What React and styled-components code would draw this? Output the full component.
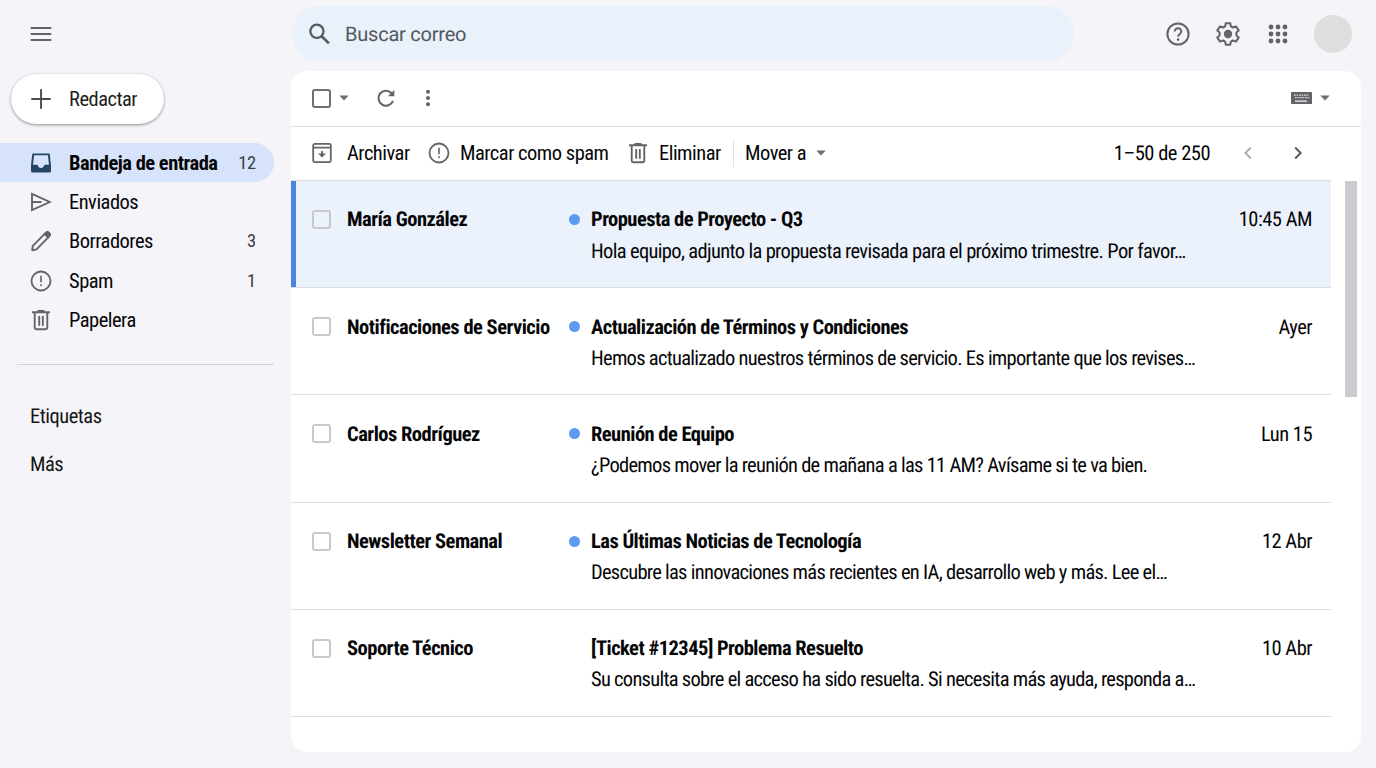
import React, { useState } from 'react';
import styled, { createGlobalStyle, css } from 'styled-components';

const GlobalStyle = createGlobalStyle`
  * { box-sizing: border-box; }
  body {
    margin: 0;
    background: #f4f4f9;
    color: #060607;
    font-family: "Roboto Condensed", Roboto, "Liberation Sans", sans-serif;
    font-stretch: 75%;
    font-size: 20.5px;
    letter-spacing: -.5px;
    line-height: 24px;
    text-rendering: geometricPrecision;
    overflow: hidden;
  }
  button {
    font: inherit;
    font-stretch: inherit;
    letter-spacing: inherit;
    color: inherit;
    background: none;
    border: 0;
    padding: 0;
    cursor: pointer;
  }
  svg { display: block; flex: none; }
`;

const Page = styled.div`
  display: grid;
  grid-template-columns: 291px 1070px;
  grid-template-rows: 71px 681px;
  width: 1376px;
  height: 768px;
`;

const MenuCell = styled.div`
  display: flex;
  align-items: center;
  padding: 0 0 3px 30px;
`;

const TopBar = styled.header`
  display: flex;
  align-items: center;
  height: 68px;
`;

const SearchBox = styled.div`
  display: flex;
  align-items: center;
  gap: 15px;
  width: 782px;
  height: 55px;
  margin: 0 0 1px 1px;
  padding-left: 17px;
  border-radius: 28px;
  background: #e9f1fb;
`;

const SearchText = styled.span`
  font-family: Roboto, sans-serif;
  font-stretch: 100%;
  font-size: 20px;
  letter-spacing: -.22px;
  color: #55575b;
`;

const TopIcons = styled.div`
  display: flex;
  align-items: center;
  gap: 26px;
  margin-left: 92px;
`;

const Avatar = styled.div`
  width: 38px;
  height: 38px;
  margin-left: -2px;
  border-radius: 50%;
  background: #dedede;
`;

const Sidebar = styled.aside`
  padding-top: 3px;
`;

const Compose = styled.button`
  display: flex;
  align-items: center;
  gap: 18px;
  width: 153px;
  height: 50px;
  margin: 0 0 19px 11px;
  padding-left: 20px;
  border-radius: 25px;
  background: #fff;
  color: #1f1f20;
  box-shadow: 0 1px 3px rgba(0, 0, 0, .42);
`;

const NavItem = styled.button`
  display: flex;
  align-items: center;
  gap: 17px;
  width: 274px;
  height: 39.4px;
  padding: 0 18px 0 30px;
  border-radius: 0 20px 20px 0;
  text-align: left;
  ${p => p.$active && css`
    background: #d6e3fa;
    font-weight: 700;
  `}
`;

const NavLabel = styled.span`
  flex: 1;
  white-space: nowrap;
`;

const Count = styled.span`
  font-size: 18.5px;
  font-weight: 400;
  letter-spacing: -.2px;
  color: #3c3d40;
`;

const NavDivider = styled.hr`
  width: 257px;
  height: 1px;
  margin: 24px 0 40px 17px;
  border: 0;
  background: #d3d4d9;
`;

const SideLink = styled.div`
  height: 24px;
  margin: 0 0 24.5px 30px;
  color: #161617;
`;

const Panel = styled.main`
  display: flex;
  flex-direction: column;
  border-radius: 16px;
  background: #fff;
  overflow: hidden;
`;

const Toolbar = styled.div`
  display: flex;
  align-items: center;
  height: 56px;
  padding: 0 31px 1px 21px;
  border-bottom: 1.5px solid #e0e1e4;
`;

const Spacer = styled.div`
  flex: 1;
`;

const Gap = styled.div`
  width: ${p => p.$w}px;
`;

const Actions = styled.div`
  display: flex;
  align-items: center;
  height: 54px;
  width: 1040px;
  padding: 0 0 1px 21px;
  border-bottom: 1px solid #dcdee1;
  white-space: nowrap;
`;

const Action = styled.button`
  display: flex;
  align-items: center;
  gap: ${p => p.$gap || 10}px;
  width: ${p => p.$w}px;
`;

const ActionDivider = styled.div`
  width: 1px;
  height: 28px;
  background: #dfe1e4;
`;

const Range = styled.span`
  margin-right: 28px;
  padding-top: 1px;
`;

const Body = styled.div`
  display: flex;
  justify-content: space-between;
  flex: 1;
`;

const List = styled.div`
  width: 1040px;
`;

const Mail = styled.div`
  display: grid;
  grid-template-columns: 35px 222px 22px 1fr auto;
  height: 107.2px;
  padding: 27.4px 19px 0 21px;
  border-bottom: 1px solid #dcdee2;
  ${p => p.$selected && css`
    background: #ebf2fc;
    box-shadow: inset 5px 0 #4a86e0;
  `}
`;

const Check = styled.span`
  width: 19px;
  height: 19px;
  border: ${p => (p.$dark ? '2px solid #6e7073' : '2px solid #c8c9cc')};
  border-radius: 3px;
  ${p => !p.$dark && 'margin-top: 1.6px;'}
`;

const Sender = styled.span`
  font-weight: 700;
  white-space: nowrap;
`;

const Dot = styled.span`
  width: 11px;
  height: 11px;
  margin-top: 5.6px;
  border-radius: 50%;
  background: ${p => (p.$on ? '#5c9bf0' : 'transparent')};
`;

const Subject = styled.div`
  font-weight: 700;
  letter-spacing: -.52px;
  white-space: nowrap;
`;

const Preview = styled.div`
  margin-top: 7.2px;
  letter-spacing: ${p => p.$tracking || -.72}px;
  white-space: nowrap;
`;

const Time = styled.span`
  white-space: nowrap;
`;

const Scrollbar = styled.div`
  width: 12px;
  height: 216px;
  margin-right: 4px;
  background: #cbccd0;
`;

const GREY = '#626467';

const MenuIcon = () => (
  <svg width="22" height="16" viewBox="0 0 22 16" fill={GREY}>
    <path d="M.7 1h20.6v1.900H.7zM.7 7h20.6v1.900H.7zM.7 13h20.6v1.900H.7z" />
  </svg>
);

const SearchIcon = () => (
  <svg width="21" height="22" viewBox="0 0 21 22" fill="none" stroke="#58595c" strokeWidth="2.3">
    <circle cx="7.9" cy="8.3" r="6.6" />
    <path d="M12.7 13.2l7.2 7.2" strokeWidth="2.7" />
  </svg>
);

const HelpIcon = () => (
  <svg width="24" height="24" viewBox="0 0 24 24" fill="none" stroke={GREY} strokeWidth="2">
    <circle cx="12" cy="12" r="10.600" />
    <path d="M8.700 9.600a3.300 3.300 0 1 1 6.600 0c0 2.300-3.200 2.500-3.200 5.100" />
    <circle cx="12.100" cy="17.600" r="1.300" fill={GREY} stroke="none" />
  </svg>
);

const GearIcon = () => (
  <svg width="24" height="24" viewBox="0 0 24 24" fill="none" stroke={GREY} strokeWidth="2" strokeLinejoin="round">
    <path d="M9.700 1.300h4.600l.5 3 2.200 1.200 2.900-1.100L22.700 8.400l-2.300 2v3.200l2.300 2-2.800 4-2.900-1.100-2.200 1.200-.5 3H9.700l-.5-3L7 18.500l-2.900 1.100-2.800-4 2.300-2v-3.200l-2.300-2 2.800-4L7 5.500l2.200-1.200z" />
    <circle cx="12" cy="12" r="4.200" fill={GREY} stroke="none" />
  </svg>
);

const AppsIcon = () => (
  <svg width="24" height="24" viewBox="0 0 24 24" fill={GREY}>
    {[5, 12, 19].map(y => [5, 12, 19].map(x => (
      <circle key={`${x}-${y}`} cx={x} cy={y} r="2.4" />
    )))}
  </svg>
);

const PlusIcon = () => (
  <svg width="20" height="20" viewBox="0 0 20 20" fill="#4a4b4e">
    <path d="M9.100.300H11V9h8.700v1.900H11v8.800H9.100v-8.800H.300V9h8.800z" />
  </svg>
);

const InboxIcon = () => (
  <svg width="22" height="20" viewBox="0 0 22 20" fill="#274466">
    <path fillRule="evenodd" d="M3.200.500h15.600a1 1 0 0 1 1 .8L21 12.500v5.500a1.500 1.500 0 0 1-1.500 1.500h-17A1.500 1.500 0 0 1 1 18v-5.500L2.200 1.300a1 1 0 0 1 1-.8zM4.100 2.200l-1.100 9.600h4.500c.4 2 1.700 3.100 3.500 3.100s3.100-1.100 3.500-3.100H19L17.900 2.200z" />
  </svg>
);

const SendIcon = () => (
  <svg width="22" height="20" viewBox="0 0 22 20" fill="none" stroke={GREY} strokeWidth="1.900">
    <path d="M2 1.900L19.700 10 2 18.100zM2 10h9.500" />
  </svg>
);

const PencilIcon = () => (
  <svg width="22" height="22" viewBox="0 0 22 22" fill="none" stroke={GREY} strokeWidth="1.900" strokeLinejoin="round">
    <path d="M2.200 20.200l.6-4.400L15.700 2.800a2.400 2.400 0 0 1 3.500 3.500L6.500 19.400z" />
    <path d="M14.600 3.900l3.600 3.600 1.300-2.100-2.600-2.900z" fill={GREY} />
  </svg>
);

const SpamIcon = () => (
  <svg width="22" height="22" viewBox="0 0 22 22" fill={GREY}>
    <circle cx="11" cy="11" r="9.500" fill="none" stroke={GREY} strokeWidth="1.800" />
    <path d="M10.200 5.700h1.600v6.500h-1.600zM10.200 14.200h1.600v1.900h-1.600z" />
  </svg>
);

const TrashIcon = () => (
  <svg width="22" height="22" viewBox="0 0 22 22" fill="none" stroke={GREY} strokeWidth="1.900">
    <path d="M2 3.300h18M7.500 2h7" />
    <path d="M4.700 3.500v15.200a1.500 1.500 0 0 0 1.500 1.500h9.600a1.500 1.500 0 0 0 1.500-1.500V3.500M9.200 7v9.700M12.800 7v9.700" />
  </svg>
);

const ArchiveIcon = () => (
  <svg width="20" height="20" viewBox="0 0 20 20" fill="none" stroke={GREY} strokeWidth="1.800">
    <rect x="1.200" y=".9" width="17.600" height="18.200" rx="1.500" />
    <path d="M1 4.700h18M10 8v4" />
    <path d="M6 10.600h8l-4 4z" fill={GREY} stroke="none" />
  </svg>
);

const RefreshIcon = () => (
  <svg width="20" height="20" viewBox="0 0 20 20" fill="none" stroke={GREY} strokeWidth="2.100">
    <path d="M17 12.900A7.500 7.500 0 1 1 15.300 4.900L17 6.500" />
    <path d="M18.300 1.900v6.400h-6.400z" fill={GREY} stroke="none" />
  </svg>
);

const MoreIcon = () => (
  <svg width="6" height="18" viewBox="0 0 6 18" fill={GREY}>
    <circle cx="3" cy="2.800" r="2" />
    <circle cx="3" cy="9" r="2" />
    <circle cx="3" cy="15.200" r="2" />
  </svg>
);

const Caret = () => (
  <svg width="10" height="6" viewBox="0 0 10 6" fill="#6c6e71">
    <path d="M.300.500h9.400L5 5.500z" />
  </svg>
);

const KeyboardIcon = () => (
  <svg width="21" height="12" viewBox="0 0 21 12">
    <rect width="21" height="12" rx=".5" fill={GREY} />
    <path d="M3 3.200h15M4 5.700h14" stroke="#d6d6d6" strokeWidth="1.300" strokeDasharray="1.700 .8" />
    <path d="M4 9.200h12" stroke="#f2f2f2" strokeWidth="1.300" />
  </svg>
);

const Chevron = ({ next }) => (
  <svg width="8" height="12" viewBox="0 0 8 12" fill="none" stroke={next ? '#58595c' : '#aeb0b3'} strokeWidth="2">
    <path d={next ? 'M1.200.500L6.600 6l-5.400 5.500' : 'M6.800.500L1.400 6l5.400 5.500'} />
  </svg>
);

const folders = [
  { name: 'Bandeja de entrada', icon: <InboxIcon />, count: 12 },
  { name: 'Enviados', icon: <SendIcon /> },
  { name: 'Borradores', icon: <PencilIcon />, count: 3 },
  { name: 'Spam', icon: <SpamIcon />, count: 1 },
  { name: 'Papelera', icon: <TrashIcon /> },
];

const mails = [
  { from: 'María González', subject: 'Propuesta de Proyecto - Q3', text: 'Hola equipo, adjunto la propuesta revisada para el próximo trimestre. Por favor…', time: '10:45 AM', unread: true, tracking: -.655 },
  { from: 'Notificaciones de Servicio', subject: 'Actualización de Términos y Condiciones', text: 'Hemos actualizado nuestros términos de servicio. Es importante que los revises…', time: 'Ayer', unread: true },
  { from: 'Carlos Rodríguez', subject: 'Reunión de Equipo', text: '¿Podemos mover la reunión de mañana a las 11 AM? Avísame si te va bien.', time: 'Lun 15', unread: true },
  { from: 'Newsletter Semanal', subject: 'Las Últimas Noticias de Tecnología', text: 'Descubre las innovaciones más recientes en IA, desarrollo web y más. Lee el…', time: '12 Abr', unread: true },
  { from: 'Soporte Técnico', subject: '[Ticket #12345] Problema Resuelto', text: 'Su consulta sobre el acceso ha sido resuelta. Si necesita más ayuda, responda a…', time: '10 Abr', unread: false },
];

export default function App() {
  const [folder, setFolder] = useState('Bandeja de entrada');
  const [selected, setSelected] = useState(0);

  return (
    <Page>
      <GlobalStyle />
      <MenuCell><MenuIcon /></MenuCell>
      <TopBar>
        <SearchBox>
          <SearchIcon />
          <SearchText>Buscar correo</SearchText>
        </SearchBox>
        <TopIcons>
          <HelpIcon />
          <GearIcon />
          <AppsIcon />
          <Avatar />
        </TopIcons>
      </TopBar>
      <Sidebar>
        <Compose><PlusIcon />Redactar</Compose>
        {folders.map(f => (
          <NavItem key={f.name} $active={f.name === folder} onClick={() => setFolder(f.name)}>
            {f.icon}
            <NavLabel>{f.name}</NavLabel>
            {f.count && <Count>{f.count}</Count>}
          </NavItem>
        ))}
        <NavDivider />
        <SideLink>Etiquetas</SideLink>
        <SideLink>Más</SideLink>
      </Sidebar>
      <Panel>
        <Toolbar>
          <Check $dark />
          <Gap $w={8} />
          <Caret />
          <Gap $w={27} />
          <RefreshIcon />
          <Gap $w={29} />
          <MoreIcon />
          <Spacer />
          <KeyboardIcon />
          <Gap $w={8} />
          <Caret />
        </Toolbar>
        <Actions>
          <Action $gap={15} $w={116}><ArchiveIcon />Archivar</Action>
          <Action $w={199}><SpamIcon />Marcar como spam</Action>
          <Action $w={106}><TrashIcon />Eliminar</Action>
          <ActionDivider />
          <Gap $w={11} />
          <Action><span>Mover a</span><Caret /></Action>
          <Spacer />
          <Range>1–50 de 250</Range>
          <Gap $w={6} />
          <Chevron />
          <Gap $w={42} />
          <Chevron next />
          <Gap $w={29} />
        </Actions>
        <Body>
          <List>
            {mails.map((m, i) => (
              <Mail key={m.from} $selected={i === selected} onClick={() => setSelected(i)}>
                <Check />
                <Sender>{m.from}</Sender>
                <Dot $on={m.unread} />
                <div>
                  <Subject>{m.subject}</Subject>
                  <Preview $tracking={m.tracking}>{m.text}</Preview>
                </div>
                <Time>{m.time}</Time>
              </Mail>
            ))}
          </List>
          <Scrollbar />
        </Body>
      </Panel>
    </Page>
  );
}
